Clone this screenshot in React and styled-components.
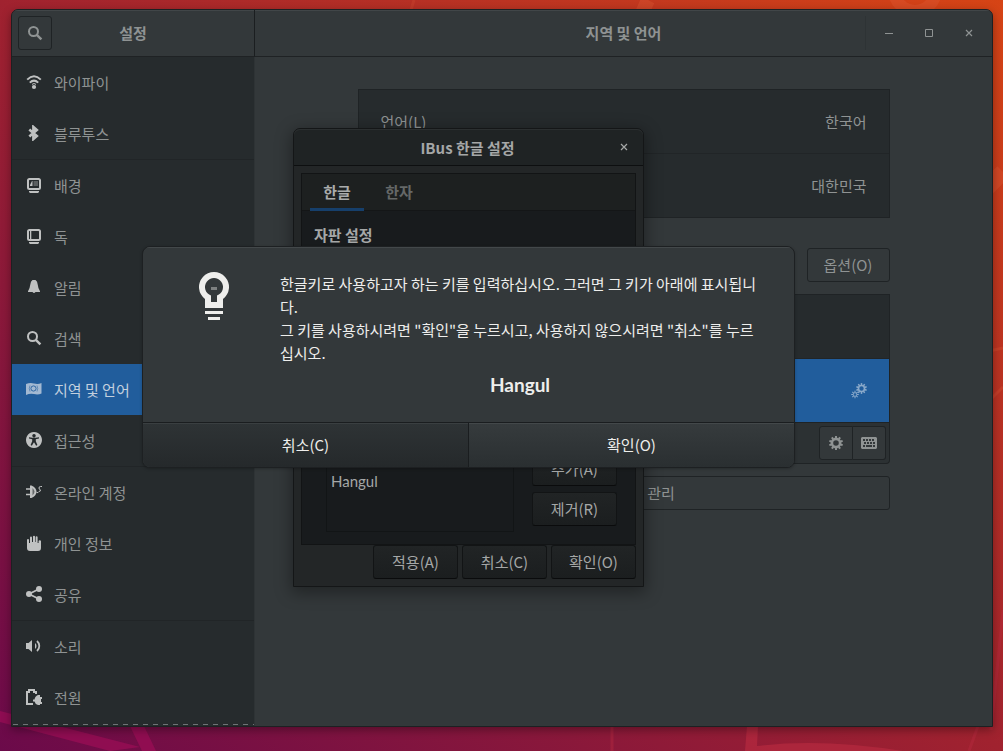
import React from "react";
import styled, { createGlobalStyle } from "styled-components";

const GlobalStyle = createGlobalStyle`
  *, *::before, *::after { box-sizing: border-box; }
  body { margin: 0; }
  button { font: inherit; color: inherit; margin: 0; padding: 0; cursor: pointer; }
  h1, h2, p, ul { margin: 0; padding: 0; }
`;

/* ---------- desktop ---------- */

const Desktop = styled.div`
  position: relative;
  display: flex;
  min-height: 100vh;
  padding: 9px 10px 24px 11px;
  overflow: hidden;
  background: linear-gradient(to top right, #6b0a4a 0%, #a0222f 50%, #d64415 100%);
  color: #8f9393;
  font-family: "Noto Sans CJK KR", "Noto Sans", sans-serif;
  font-size: 15px;
  line-height: 23px;
`;

const Wallpaper = styled.svg`
  position: absolute;
  inset: 0;
  width: 100%;
  height: 100%;
`;

/* ---------- settings window ---------- */

const Window = styled.section`
  position: relative;
  flex: 1;
  display: grid;
  grid-template-columns: 243px 1fr;
  grid-template-rows: 47px 1fr;
  border: 1px solid #1d2022;
  border-radius: 7px 7px 0 0;
  overflow: hidden;
  background: #33383a;
  box-shadow: 0 3px 10px rgba(0, 0, 0, 0.35);
`;

const HeaderBar = styled.header`
  display: grid;
  grid-template-columns: ${(p) => p.$columns};
  align-items: center;
  padding: 0 6px;
  border-bottom: 1px solid #1f2224;
  border-right: ${(p) => (p.$divided ? "1px solid #1b1e20" : "0")};
  background: #33383a;
  box-shadow: inset 0 1px #414648;
`;

const Title = styled.h1`
  padding-bottom: ${(p) => (p.$raised ? "2px" : "0")};
  font-size: 15px;
  line-height: 23px;
  font-weight: 700;
  text-align: center;
`;

const FrameButton = styled.button`
  display: inline-flex;
  align-items: center;
  justify-content: center;
  min-width: ${(p) => p.$width || "34px"};
  height: 34px;
  border: 1px solid #1f2325;
  border-radius: 3px;
  background: #33383a;
`;

const ManageButton = styled(FrameButton)`
  padding: 0 0 2px 75px;
`;

const OptionsButton = styled(FrameButton)`
  padding-bottom: 2px;
`;

const WindowControls = styled.div`
  display: flex;
  justify-content: flex-end;
  gap: 6px;
  &::before {
    content: "";
    width: 1px;
    background: #2e3335;
  }
`;

const ControlButton = styled.button`
  display: flex;
  align-items: center;
  justify-content: center;
  width: 34px;
  height: 34px;
  border: 0;
  background: none;
`;

const Sidebar = styled.nav`
  display: flex;
  flex-direction: column;
  justify-content: space-between;
  padding-bottom: 1px;
  border-right: 1px solid #2e3335;
  background: #262b2d;
  &::after {
    content: "";
    height: 1px;
    margin-top: 1px;
    background: repeating-linear-gradient(90deg, transparent 0 1px, #6f7375 1px 6px, transparent 6px 10px);
  }
`;

const PanelList = styled.ul`
  list-style: none;
`;

const PanelItem = styled.li`
  border-top: ${(p) => (p.$grouped ? "1px solid #212527" : "0")};
`;

const PanelButton = styled.button`
  display: flex;
  gap: 12px;
  width: 100%;
  height: 51px;
  padding: 17px 14px;
  border: 0;
  background: ${(p) => (p.$selected ? "#215d9c" : "transparent")};
  color: ${(p) => (p.$selected ? "#c3d0de" : "#8f9393")};
  line-height: 18px;
  text-align: left;
  svg { color: ${(p) => (p.$selected ? "#a3b9d2" : "#bfc1c1")}; }
`;

const Content = styled.main`
  padding: 32px 24px;
`;

const Column = styled.div`
  display: flex;
  flex-direction: column;
  max-width: 532px;
  margin: 0 auto;
`;

const List = styled.ul`
  list-style: none;
  border: 1px solid #1f2325;
  background: #262b2d;
`;

const ListRow = styled.li`
  display: flex;
  align-items: center;
  justify-content: space-between;
  box-sizing: content-box;
  height: 63px;
  padding: 0 22px;
  background: ${(p) => (p.$selected ? "#215d9c" : "transparent")};
  color: ${(p) => (p.$selected ? "#8aa9ca" : "inherit")};
  & + & { border-top: 1px solid #212527; }
`;

const RowEnd = styled.span`
  margin-left: auto;
  display: flex;
`;

const SectionHead = styled.div`
  display: flex;
  justify-content: flex-end;
  margin: 30px 0 12px;
`;

const SourceToolbar = styled.div`
  display: flex;
  justify-content: flex-end;
  padding: 3px;
  border: 1px solid #1f2325;
  border-top: 0;
  border-radius: 0 0 4px 4px;
  background: #2c3133;
  margin-bottom: 12px;
`;

const LinkedButton = styled(FrameButton)`
  & + & {
    border-left: 0;
    border-radius: 0 3px 3px 0;
    min-width: 33px;
  }
  &:first-child { border-radius: 3px 0 0 3px; }
`;

/* ---------- IBus dialog ---------- */

const SetupDialog = styled.section`
  position: absolute;
  left: 293px;
  top: 128px;
  width: 351px;
  border: 1px solid #141617;
  border-radius: 7px 7px 0 0;
  background: #232627;
  color: #a5a7a7;
  box-shadow: 0 4px 16px 2px rgba(0, 0, 0, 0.35);
`;

const SetupHeader = styled.header`
  display: grid;
  grid-template-columns: 34px 1fr 34px;
  align-items: center;
  height: 37px;
  padding-right: 2px;
  border-bottom: 1px solid #0d0f10;
  border-radius: 6px 6px 0 0;
  background: #1f2324;
  box-shadow: inset 0 1px #2b2f30;
`;

const SetupBody = styled.div`
  padding: 7px;
`;

const Notebook = styled.div`
  border: 1px solid #121415;
  background: #181b1d;
`;

const TabBar = styled.div`
  display: flex;
  gap: 8px;
  padding-left: 8px;
  height: 37px;
  border-bottom: 1px solid #141617;
  background: #1d2020;
`;

const Tab = styled.button`
  width: 54px;
  height: 37px;
  border: 0;
  border-bottom: 3px solid ${(p) => (p.$active ? "#163f6b" : "transparent")};
  background: none;
  font-weight: 700;
  color: ${(p) => (p.$active ? "#a9abab" : "#656868")};
`;

const NotebookPage = styled.div`
  display: flex;
  flex-direction: column;
  justify-content: space-between;
  min-height: 333px;
  padding: 12px 18px 12px 12px;
`;

const PageHeading = styled.h2`
  font-size: 15px;
  line-height: 23px;
  font-weight: 700;
`;

const KeyArea = styled.div`
  display: flex;
  align-items: center;
  gap: 18px;
  padding-left: 12px;
`;

const KeyList = styled.ul`
  list-style: none;
  flex: 1;
  height: 86px;
  padding: 23px 4px 0;
  border: 1px solid #121516;
`;

const KeyName = styled.li`
  font-family: Lato, "Noto Sans CJK KR", sans-serif;
`;

const ButtonStack = styled.div`
  display: flex;
  flex-direction: column;
  gap: 6px;
`;

const DarkButton = styled.button`
  width: 85px;
  height: 34px;
  border: 1px solid #121415;
  border-bottom-color: #0a0b0c;
  border-radius: 3px;
  background: linear-gradient(#212425, #1b1e1f);
  line-height: 30px;
`;

const ActionRow = styled.footer`
  display: flex;
  justify-content: flex-end;
  gap: 4px;
`;

/* ---------- key capture message ---------- */

const Message = styled.section`
  position: absolute;
  left: 142px;
  top: 246px;
  width: 653px;
  border: 1px solid #1d2022;
  border-radius: 8px;
  overflow: hidden;
  background: #33383a;
  color: #eeeeec;
  box-shadow: 0 1px 3px rgba(0, 0, 0, 0.25);
`;

const MessageBody = styled.div`
  display: flex;
  gap: 42px;
  height: 175px;
  padding: 25px 34px 24px 47px;
  box-shadow: inset 0 1px #43484a;
`;

const MessageText = styled.div`
  width: 480px;
`;

const PressedKey = styled.p`
  margin-top: 9px;
  font-family: Lato, sans-serif;
  font-size: 19px;
  font-weight: 700;
  text-align: center;
`;

const MessageActions = styled.footer`
  display: flex;
  border-top: 1px solid #1a1d1f;
`;

const MessageButton = styled.button`
  flex: 1;
  height: 44px;
  padding-bottom: 2px;
  border: 0;
  background: ${(p) =>
    p.$suggested ? "linear-gradient(#363b3d, #2a2f31)" : "linear-gradient(#2e3335, #25292b)"};
  box-shadow: inset 0 1px ${(p) => (p.$suggested ? "#43484a" : "#3a3f41")};
  & + & {
    border-left: 1px solid #1a1d1f;
  }
`;

/* ---------- icons ---------- */

const Glyph = styled.svg`
  flex: none;
`;

const Svg = ({ size = 16, children }) => (
  <Glyph width={size} height={size} viewBox={`0 0 ${size} ${size}`} fill="currentColor" aria-hidden="true">
    {children}
  </Glyph>
);

const line = { fill: "none", stroke: "currentColor" };

const SearchIcon = () => (
  <Svg>
    <circle cx="6.5" cy="6.5" r="4.5" {...line} strokeWidth="2" />
    <path d="M9.8 9.8 14.4 14.4" {...line} strokeWidth="2.4" />
  </Svg>
);

const icons = {
  wifi: (
    <Svg>
      <path d="M1.200 5.600Q8-1 14.800 5.600M3.800 8.600Q8 4.600 12.200 8.600" {...line} strokeWidth="2" />
      <path d="M6 10.400Q8 8.600 10 10.400" {...line} strokeWidth="1" />
      <circle cx="8" cy="13" r="2.100" />
    </Svg>
  ),
  bluetooth: (
    <Svg>
      <path d="M3.300 4.500 10.800 11 7.400 14V2l3.400 3-7.500 6.500" {...line} strokeWidth="2.600" />
    </Svg>
  ),
  background: (
    <Svg>
      <rect x="2" y="2" width="12" height="10" rx="1.500" {...line} strokeWidth="2" />
      <path d="M4 9V8l2-4h.5v5z" />
      <path d="M7.500 4H12v5H7.500z" opacity=".35" />
      <path d="M3 14h10v1l-1 1H4l-1-1z" />
    </Svg>
  ),
  dock: (
    <Svg>
      <rect x="2" y="2" width="12" height="10" rx="1.500" {...line} strokeWidth="2" />
      <path d="M4 3h1.300v8H4z" />
      <path d="M3 14h10v1l-1 1H4l-1-1z" />
    </Svg>
  ),
  bell: (
    <Svg>
      <path d="M6.500 1h3q2 1.400 2.200 4.500T14 12.200v.8H2v-.8Q4 9 4.300 5.500T6.500 1z" />
      <path d="M6.500 13h3q-1.500 2-3 0z" />
    </Svg>
  ),
  search: <SearchIcon />,
  region: (
    <Svg>
      <path d="M0 3q4-1.500 8-.5t7.500-.5v10.500q-3.500 1.500-7.500.5T0 14z" />
      <g fill="none" stroke="#215d9c">
        <circle cx="7.500" cy="7.500" r="2.600" strokeWidth="1" strokeOpacity=".9" />
        <path d="M4 4.500Q2.500 7.500 4 10.500M11 4.500q1.500 3 0 6" strokeWidth="1" strokeOpacity=".5" />
      </g>
    </Svg>
  ),
  access: (
    <Svg>
      <path
        fillRule="evenodd"
        d="M8 0a8 8 0 1 1-.01 0zM8 2a1.700 1.700 0 1 0 .01 0zM3 5.200v1.300l3.200.8v2L4.600 13l1.200.7L8 10.200l2.200 3.500 1.200-.7-1.600-3.700v-2l3.200-.8V5.200l-3.500.6h-3z"
      />
    </Svg>
  ),
  online: (
    <Svg>
      <path d="M0 5h4M0 10.500h4" {...line} strokeWidth="1.700" />
      <path d="M4 1.500h1.500Q10.500 4 10.500 7.800T5.500 14H4z" />
      <path d="M6.500 4q2 2 2 3.800T6.500 11.500z" fill="#262b2d" opacity=".6" />
      <path d="M10.500 8.500q2 .6 2-.8M16 2.500h-1.500Q13 2.500 13 4t1.200 1.600q1 1.800-1.200 1.900" {...line} strokeWidth="1" />
    </Svg>
  ),
  privacy: (
    <Svg>
      <path d="M1 5q0-1 1-1t1 1v3h1V2.500q0-1 1-1t1 1V7h1V1.500q0-.8 1-.8t1 .8V7h.6V2.200q0-.9 1-.9t1 .9V8h1V6q.2-.8 1.200-.8T15 6v7q0 3-3 3H4q-3 0-3-3z" />
    </Svg>
  ),
  share: (
    <Svg>
      <circle cx="3" cy="8" r="3" />
      <circle cx="13" cy="3" r="3" />
      <circle cx="13" cy="13" r="3" />
      <path d="M13 3 3 8l10 5" {...line} strokeWidth="1.800" />
    </Svg>
  ),
  sound: (
    <Svg>
      <path d="M0 5h2.500L6 2v12l-3.500-3H0z" />
      <path d="M9 5v6q1.500-1 1.500-3T9 5z" />
      <path d="M11 3q2.300 2 2.300 5T11 13" {...line} strokeWidth="1.800" />
    </Svg>
  ),
  power: (
    <Svg>
      <path d="M7 15H1V3h2V1h5v2h2v2" {...line} strokeWidth="2" />
      <path d="M12 6h2v2h2v2h-1v3h1v2h-2v1h-2q-3-1-3.500-3.500H7v-2h1.500Q9 7 12 6z" />
    </Svg>
  ),
};

const Gear = ({ cx, cy, r, hole, teeth = 8 }) => (
  <g>
    <circle cx={cx} cy={cy} r={(r - 1.6 + hole) / 2} {...line} strokeWidth={r - 1.6 - hole} />
    {Array.from({ length: teeth }, (_, i) => (
      <rect
        key={i}
        x={cx - r * 0.14}
        y={cy - r}
        width={r * 0.28}
        height="2.200"
        transform={`rotate(${(360 / teeth) * i} ${cx} ${cy})`}
      />
    ))}
  </g>
);

const GearIcon = () => (
  <Svg>
    <Gear cx={8} cy={8} r={7} hole={2.8} teeth={10} />
  </Svg>
);

const GearsIcon = () => (
  <Svg>
    <Gear cx={10.500} cy={5.500} r={5.400} hole={2.200} teeth={10} />
    <Gear cx={4} cy={11.500} r={3.800} hole={1.400} />
  </Svg>
);

const KeyboardIcon = () => (
  <Svg>
    <path
      fillRule="evenodd"
      d="M1 2h14l1 1v10l-1 1H1l-1-1V3zM2 4v2h2V4zM5 4v2h2V4zM8 4v2h2V4zM11 4v2h2V4zM3 7v2h2V7zM6 7v2h2V7zM9 7v2h2V7zM12 7v2h2V7zM2 10v2h2v-2zM5 10v2h6v-2zM12 10v2h2v-2z"
    />
  </Svg>
);

const BulbIcon = () => (
  <Svg size={48}>
    <path fillRule="evenodd" d="M15 36V27A15 15 0 1 1 33 27V36zM21 30V23.500A9 9 0 1 1 27 23.500V30z" />
    <path d="M15 39h18v3H15zM18 45h12v3H18z" />
    <path d="M21 15h6v3h-6z" opacity=".4" />
  </Svg>
);

const CloseIcon = () => (
  <Svg>
    <path d="M5 5l6 6M11 5l-6 6" {...line} strokeWidth="1.200" />
  </Svg>
);

/* ---------- data ---------- */

const panels = [
  { icon: "wifi", label: "와이파이" },
  { icon: "bluetooth", label: "블루투스" },
  { icon: "background", label: "배경", grouped: true },
  { icon: "dock", label: "독" },
  { icon: "bell", label: "알림" },
  { icon: "search", label: "검색" },
  { icon: "region", label: "지역 및 언어", selected: true },
  { icon: "access", label: "접근성" },
  { icon: "online", label: "온라인 계정", grouped: true },
  { icon: "privacy", label: "개인 정보" },
  { icon: "share", label: "공유" },
  { icon: "sound", label: "소리", grouped: true },
  { icon: "power", label: "전원" },
];

export default function App() {
  return (
    <Desktop>
      <GlobalStyle />
      <Wallpaper viewBox="0 0 1003 751" preserveAspectRatio="none" aria-hidden="true" fill="none">
        <circle cx="915" cy="-10" r="21" stroke="#e2603a" strokeOpacity=".3" strokeWidth="12" />
        <path d="M648 0Q638 20 634 40" stroke="#e0603a" strokeOpacity=".3" strokeWidth="14" />
        <path d="M414 0 408 20" stroke="#e0603a" strokeOpacity=".2" strokeWidth="3" />
        <path d="M985 190 1003 172" stroke="#e2603a" strokeOpacity=".3" strokeWidth="16" />
        <path d="M985 405 1003 387M985 352 1003 348" stroke="#e2603a" strokeOpacity=".25" strokeWidth="3" />
        <path d="M0 711l140 36-30 4L0 722z" fill="#a00e58" fillOpacity=".65" />
        <path d="M130 726h14l12 25h-14z" fill="#a00e58" fillOpacity=".65" />
        <path d="M747 726h11l-1 20q64-8 146 5H745z" fill="#b92b40" fillOpacity=".65" />
        <path d="M612 726v25M978 726l-9 25M1003 610l-12 120" stroke="#b92b40" strokeOpacity=".4" strokeWidth="3" />
      </Wallpaper>

      <Window>
        <HeaderBar $columns="34px 1fr 34px" $divided>
          <FrameButton aria-label="검색">
            <SearchIcon />
          </FrameButton>
          <Title $raised>설정</Title>
        </HeaderBar>
        <HeaderBar $columns="1fr auto 1fr">
          <span />
          <Title $raised>지역 및 언어</Title>
          <WindowControls>
            <ControlButton aria-label="최소화">
              <Svg>
                <path d="M4 8h8v1H4z" />
              </Svg>
            </ControlButton>
            <ControlButton aria-label="최대화">
              <Svg>
                <path d="M4.500 4.500h7v7h-7z" {...line} />
              </Svg>
            </ControlButton>
            <ControlButton aria-label="닫기">
              <CloseIcon />
            </ControlButton>
          </WindowControls>
        </HeaderBar>

        <Sidebar>
          <PanelList>
            {panels.map((p) => (
              <PanelItem key={p.label} $grouped={p.grouped}>
                <PanelButton $selected={p.selected}>
                  {icons[p.icon]}
                  {p.label}
                </PanelButton>
              </PanelItem>
            ))}
          </PanelList>
        </Sidebar>

        <Content>
          <Column>
            <List>
              <ListRow>
                <span>언어(L)</span>
                <span>한국어</span>
              </ListRow>
              <ListRow>
                <RowEnd>대한민국</RowEnd>
              </ListRow>
            </List>
            <SectionHead>
              <OptionsButton $width="83px">옵션(O)</OptionsButton>
            </SectionHead>
            <List>
              <ListRow />
              <ListRow $selected>
                <RowEnd>
                  <GearsIcon />
                </RowEnd>
              </ListRow>
            </List>
            <SourceToolbar>
              <LinkedButton aria-label="설정">
                <GearIcon />
              </LinkedButton>
              <LinkedButton aria-label="키보드">
                <KeyboardIcon />
              </LinkedButton>
            </SourceToolbar>
            <ManageButton>관리</ManageButton>
          </Column>
        </Content>
      </Window>

      <SetupDialog role="dialog" aria-label="IBus 한글 설정">
        <SetupHeader>
          <span />
          <Title>IBus 한글 설정</Title>
          <ControlButton aria-label="닫기">
            <CloseIcon />
          </ControlButton>
        </SetupHeader>
        <SetupBody>
          <Notebook>
            <TabBar role="tablist">
              <Tab role="tab" aria-selected="true" $active>
                한글
              </Tab>
              <Tab role="tab" aria-selected="false">
                한자
              </Tab>
            </TabBar>
            <NotebookPage>
              <PageHeading>자판 설정</PageHeading>
              <KeyArea>
                <KeyList>
                  <KeyName>Hangul</KeyName>
                </KeyList>
                <ButtonStack>
                  <DarkButton>추가(A)</DarkButton>
                  <DarkButton>제거(R)</DarkButton>
                </ButtonStack>
              </KeyArea>
            </NotebookPage>
          </Notebook>
          <ActionRow>
            <DarkButton>적용(A)</DarkButton>
            <DarkButton>취소(C)</DarkButton>
            <DarkButton>확인(O)</DarkButton>
          </ActionRow>
        </SetupBody>
      </SetupDialog>

      <Message role="dialog" aria-label="Hangul">
        <MessageBody>
          <BulbIcon />
          <MessageText>
            <p>한글키로 사용하고자 하는 키를 입력하십시오. 그러면 그 키가 아래에 표시됩니다.</p>
            <p>그 키를 사용하시려면 "확인"을 누르시고, 사용하지 않으시려면 "취소"를 누르십시오.</p>
            <PressedKey>Hangul</PressedKey>
          </MessageText>
        </MessageBody>
        <MessageActions>
          <MessageButton>취소(C)</MessageButton>
          <MessageButton $suggested>확인(O)</MessageButton>
        </MessageActions>
      </Message>
    </Desktop>
  );
}
